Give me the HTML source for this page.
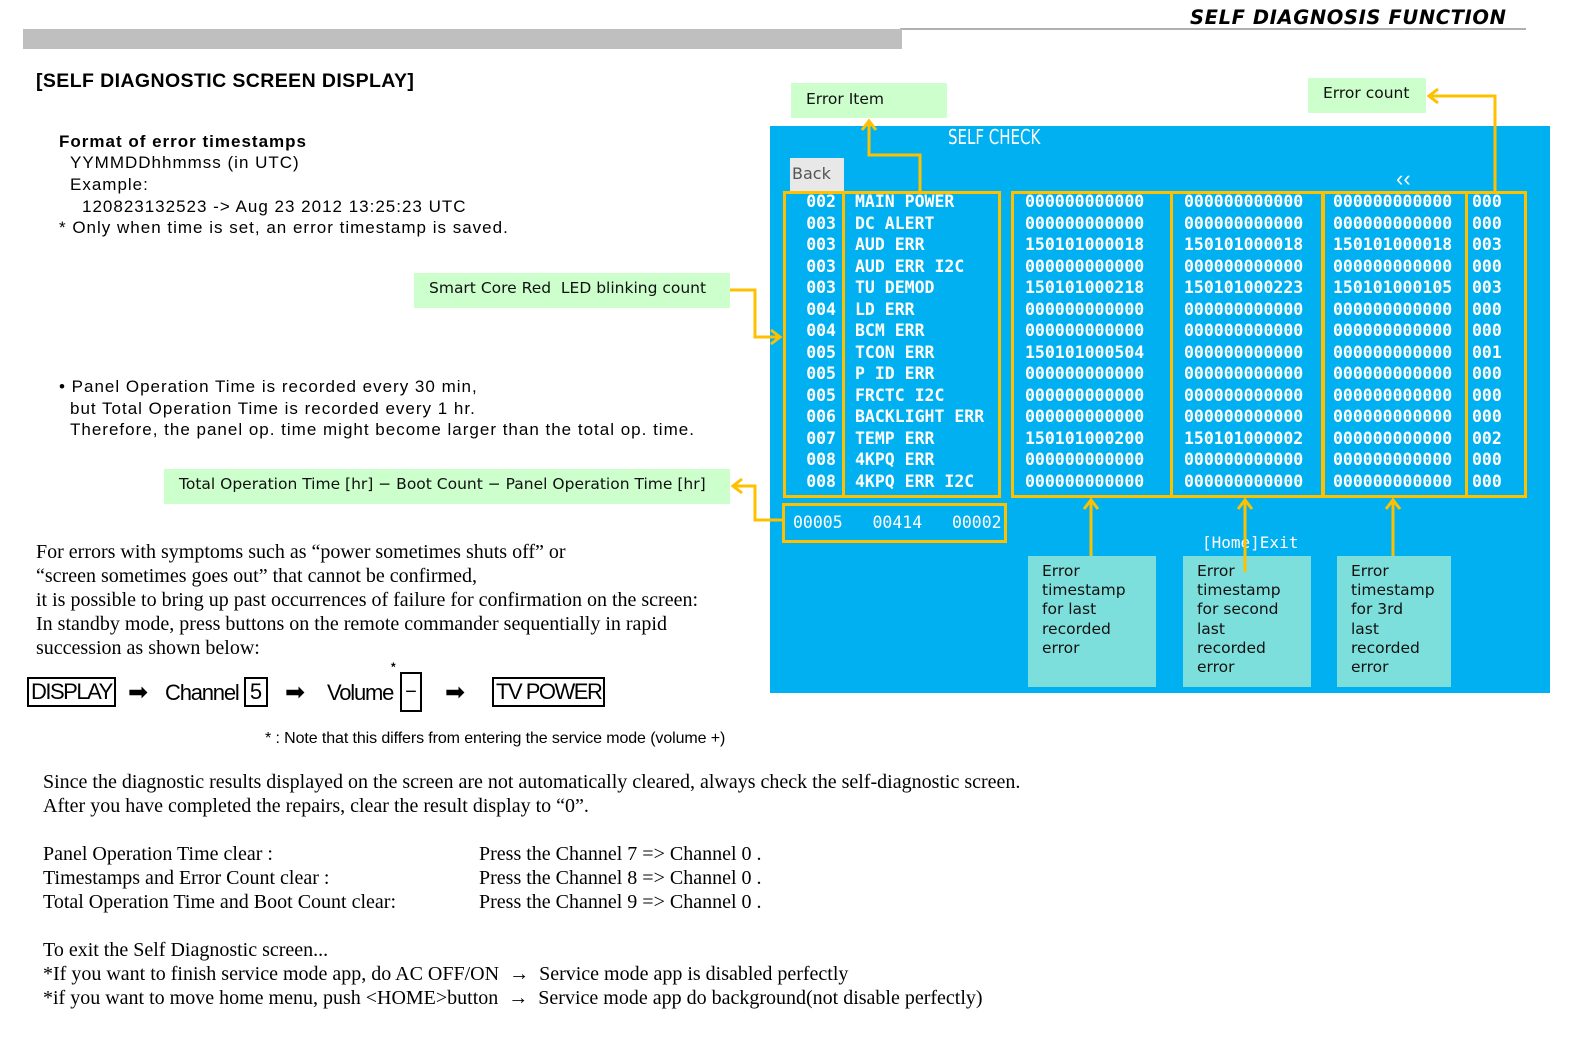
<!DOCTYPE html>
<html><head><meta charset="utf-8"><style>
*{margin:0;padding:0;box-sizing:border-box}
body{width:1588px;height:1046px;background:#fff;position:relative;overflow:hidden;font-family:"Liberation Sans",sans-serif;color:#000}
.a{position:absolute;white-space:nowrap}
.sans{font-family:"Liberation Sans",sans-serif;font-size:17px;letter-spacing:1px}
.ser{font-family:"Liberation Serif",serif;font-size:20px;letter-spacing:0}
.green{position:absolute;background:#ccffcc;font-family:"DejaVu Sans",sans-serif;font-size:15.5px;color:#111;white-space:nowrap}
.mono{font-family:"DejaVu Sans Mono","Liberation Mono",monospace;font-weight:bold;font-size:16.5px;color:#fff;line-height:21.5px}
.box{position:absolute;border:3px solid #ffc000}
.teal{position:absolute;background:#7ddfdc;font-family:"DejaVu Sans",sans-serif;font-size:15.5px;line-height:19.2px;color:#111;padding:6px 0 0 14px;top:556px}
.key{position:absolute;border:2px solid #000;font-family:"Liberation Sans",sans-serif;font-size:22px;transform-origin:left;line-height:26px;padding:0 2px}
</style></head><body>
<div class="a" style="left:1190px;top:6px;font-family:'DejaVu Sans',sans-serif;font-weight:bold;font-style:italic;font-size:19.5px;letter-spacing:0.6px">SELF DIAGNOSIS FUNCTION</div>
<div class="a" style="left:900px;top:28px;width:626px;height:2px;background:#b0b0b0"></div>
<div class="a" style="left:23px;top:29px;width:879px;height:20px;background:#bfbfbf"></div>
<div class="a" style="left:36px;top:70px;font-weight:bold;font-size:19.5px;letter-spacing:0.4px">[SELF DIAGNOSTIC SCREEN DISPLAY]</div>

<div class="a sans" style="left:59px;top:132px;font-weight:bold">Format of error timestamps</div>
<div class="a sans" style="left:70px;top:153px">YYMMDDhhmmss (in UTC)</div>
<div class="a sans" style="left:70px;top:175px">Example:</div>
<div class="a sans" style="left:82px;top:197px">120823132523 -&gt; Aug 23 2012 13:25:23 UTC</div>
<div class="a sans" style="left:59px;top:218px">* Only when time is set, an error timestamp is saved.</div>

<div class="green" style="left:414px;top:273px;width:316px;height:35px;padding:6px 0 0 15px">Smart Core Red&nbsp; LED blinking count</div>

<div class="a sans" style="left:59px;top:377px">• Panel Operation Time is recorded every 30 min,</div>
<div class="a sans" style="left:70px;top:399px">but Total Operation Time is recorded every 1 hr.</div>
<div class="a sans" style="left:70px;top:420px">Therefore, the panel op. time might become larger than the total op. time.</div>

<div class="green" style="left:164px;top:469px;width:566px;height:35px;padding:6px 0 0 15px">Total Operation Time [hr] − Boot Count − Panel Operation Time [hr]</div>

<div class="a ser" style="left:36px;top:540px;line-height:24px">For errors with symptoms such as “power sometimes shuts off” or<br>“screen sometimes goes out” that cannot be confirmed,<br>it is possible to bring up past occurrences of failure for confirmation on the screen:<br>In standby mode, press buttons on the remote commander sequentially in rapid<br>succession as shown below:</div>

<div class="key" style="left:27px;top:677px;letter-spacing:-1.5px">DISPLAY</div>
<div class="a" style="left:128px;top:678px;font-size:24px">➡</div>
<div class="a" style="left:165px;top:680px;font-size:22px;letter-spacing:-1.2px">Channel</div>
<div class="key" style="left:244px;top:677px;width:24px;text-align:center;padding:0">5</div>
<div class="a" style="left:285px;top:678px;font-size:24px">➡</div>
<div class="a" style="left:327px;top:680px;font-size:22px;letter-spacing:-1.2px">Volume</div>
<div class="a" style="left:391px;top:660px;font-size:12px;font-weight:bold">*</div>
<div class="a" style="left:400px;top:672px;width:22px;height:40px;border:2px solid #000;text-align:center;font-size:20px;line-height:36px">−</div>
<div class="a" style="left:445px;top:678px;font-size:24px">➡</div>
<div class="key" style="left:492px;top:677px;letter-spacing:-1.5px">TV POWER</div>
<div class="a" style="left:265px;top:730px;font-size:16px;letter-spacing:-0.1px">* : Note that this differs from entering the service mode (volume +)</div>

<div class="a ser" style="left:43px;top:770px;line-height:24px">Since the diagnostic results displayed on the screen are not automatically cleared, always check the self-diagnostic screen.<br>After you have completed the repairs, clear the result display to “0”.</div>
<div class="a ser" style="left:43px;top:842px;line-height:24px">Panel Operation Time clear :<br>Timestamps and Error Count clear :<br>Total Operation Time and Boot Count clear:</div>
<div class="a ser" style="left:479px;top:842px;line-height:24px">Press the Channel 7 =&gt; Channel 0 .<br>Press the Channel 8 =&gt; Channel 0 .<br>Press the Channel 9 =&gt; Channel 0 .</div>
<div class="a ser" style="left:43px;top:938px;line-height:24px">To exit the Self Diagnostic screen...<br>*If you want to finish service mode app, do AC OFF/ON &nbsp;→&nbsp; Service mode app is disabled perfectly<br>*if you want to move home menu, push &lt;HOME&gt;button &nbsp;→&nbsp; Service mode app do background(not disable perfectly)</div>

<!-- blue screen -->
<div class="a" style="left:770px;top:126px;width:780px;height:567px;background:#00b0f0"></div>
<div class="a" style="left:948px;top:125px;color:#fff;font-family:'DejaVu Sans',sans-serif;font-size:20px;transform:scaleX(0.75);transform-origin:left">SELF CHECK</div>
<div class="a" style="left:790px;top:158px;width:54px;height:34px;background:#e8e8e8;color:#555;font-family:'DejaVu Sans',sans-serif;font-size:16px;padding:6px 0 0 2px">Back</div>
<div class="a" style="left:1396px;top:166px;color:#fff;font-size:22px">‹‹</div>
<div class="green" style="left:791px;top:83px;width:156px;height:35px;padding:7px 0 0 15px">Error Item</div>
<div class="green" style="left:1308px;top:78px;width:118px;height:35px;padding:6px 0 0 15px">Error count</div>

<div class="box" style="left:783px;top:191px;width:62px;height:307px"></div>
<div class="box" style="left:842px;top:191px;width:159px;height:307px"></div>
<div class="box" style="left:1011px;top:191px;width:162px;height:307px"></div>
<div class="box" style="left:1170px;top:191px;width:155px;height:307px"></div>
<div class="box" style="left:1321px;top:191px;width:147px;height:307px"></div>
<div class="box" style="left:1465px;top:191px;width:62px;height:307px"></div>
<div class="box" style="left:782px;top:503px;width:225px;height:40px"></div>

<div class="a mono" style="left:786px;top:191px;width:50px;text-align:right">002<br>003<br>003<br>003<br>003<br>004<br>004<br>005<br>005<br>005<br>006<br>007<br>008<br>008</div>
<div class="a mono" style="left:855px;top:191px">MAIN POWER<br>DC ALERT<br>AUD ERR<br>AUD ERR I2C<br>TU DEMOD<br>LD ERR<br>BCM ERR<br>TCON ERR<br>P ID ERR<br>FRCTC I2C<br>BACKLIGHT ERR<br>TEMP ERR<br>4KPQ ERR<br>4KPQ ERR I2C</div>
<div class="a mono" style="left:1025px;top:191px">000000000000<br>000000000000<br>150101000018<br>000000000000<br>150101000218<br>000000000000<br>000000000000<br>150101000504<br>000000000000<br>000000000000<br>000000000000<br>150101000200<br>000000000000<br>000000000000</div>
<div class="a mono" style="left:1184px;top:191px">000000000000<br>000000000000<br>150101000018<br>000000000000<br>150101000223<br>000000000000<br>000000000000<br>000000000000<br>000000000000<br>000000000000<br>000000000000<br>150101000002<br>000000000000<br>000000000000</div>
<div class="a mono" style="left:1333px;top:191px">000000000000<br>000000000000<br>150101000018<br>000000000000<br>150101000105<br>000000000000<br>000000000000<br>000000000000<br>000000000000<br>000000000000<br>000000000000<br>000000000000<br>000000000000<br>000000000000</div>
<div class="a mono" style="left:1472px;top:191px">000<br>000<br>003<br>000<br>003<br>000<br>000<br>001<br>000<br>000<br>000<br>002<br>000<br>000</div>
<div class="a mono" style="left:793px;top:512px;font-weight:normal;word-spacing:0">00005&nbsp;&nbsp;&nbsp;00414&nbsp;&nbsp;&nbsp;00002</div>
<div class="a" style="left:1202px;top:533px;color:#fff;font-family:'DejaVu Sans Mono',monospace;font-size:16px">[Home]Exit</div>

<div class="teal" style="left:1028px;width:128px;height:131px">Error<br>timestamp<br>for last<br>recorded<br>error</div>
<div class="teal" style="left:1183px;width:128px;height:131px">Error<br>timestamp<br>for second<br>last<br>recorded<br>error</div>
<div class="teal" style="left:1337px;width:114px;height:131px">Error<br>timestamp<br>for 3rd<br>last<br>recorded<br>error</div>

<svg class="a" style="left:0;top:0" width="1588" height="1046" fill="none" stroke="#ffc000" stroke-width="3">
<polyline points="920,192 920,155 869,155 869,122"/><polyline points="862,130 869,121 876,130"/>
<polyline points="1495,192 1495,96 1430,96"/><polyline points="1438,89 1429,96 1438,103"/>
<polyline points="730,290 755,290 755,337 779,337"/><polyline points="771,330 780,337 771,344"/>
<polyline points="783,520 755,520 755,486 734,486"/><polyline points="742,479 733,486 742,493"/>
<line x1="1091" y1="556" x2="1091" y2="500"/><polyline points="1084,509 1091,500 1098,509"/>
<line x1="1245" y1="572" x2="1245" y2="500"/><polyline points="1238,509 1245,500 1252,509"/>
<line x1="1393" y1="556" x2="1393" y2="500"/><polyline points="1386,509 1393,500 1400,509"/>
</svg>
</body></html>
